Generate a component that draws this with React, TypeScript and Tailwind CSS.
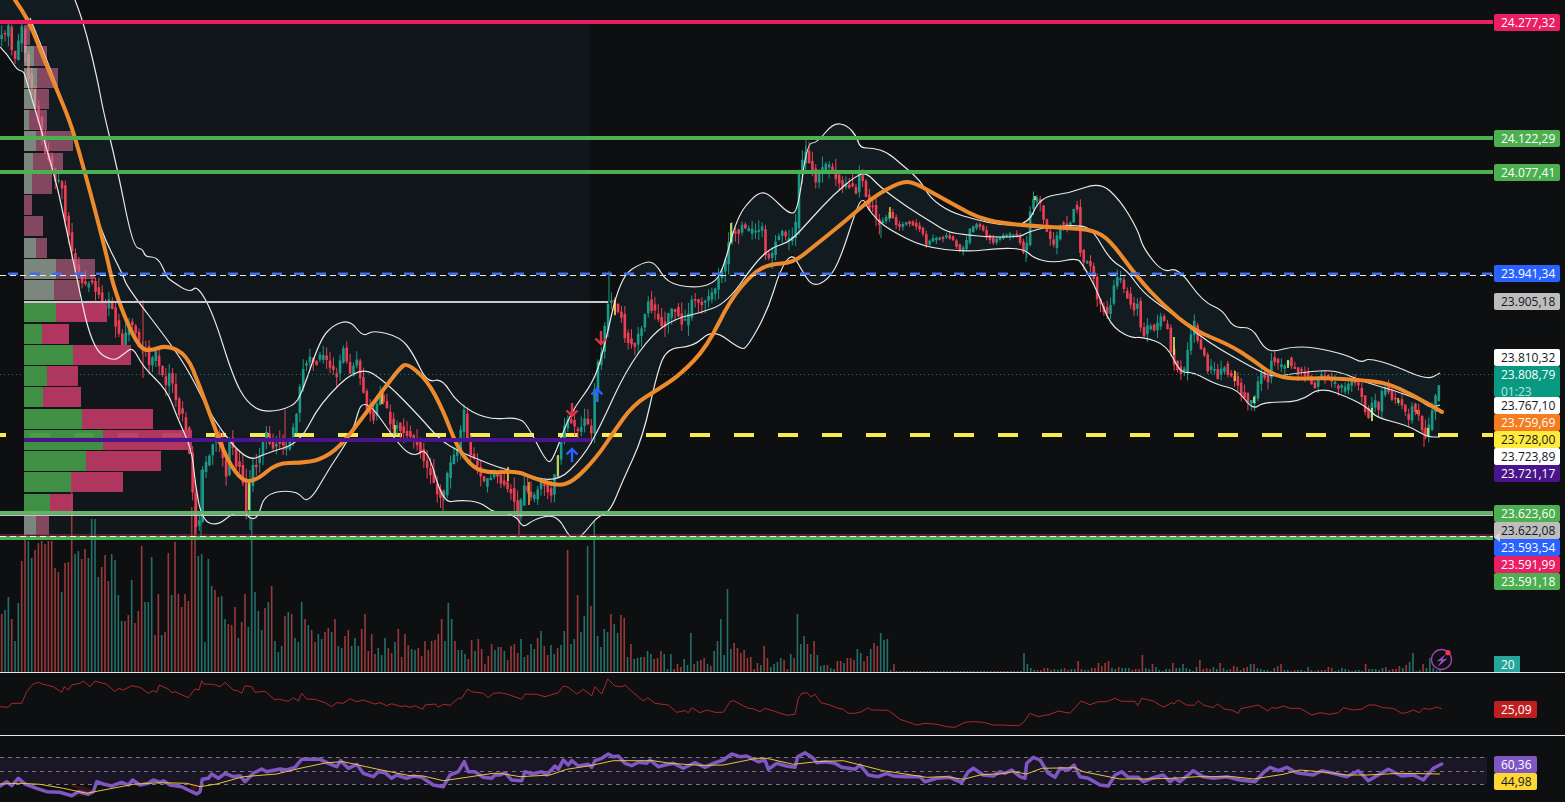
const FONT = "font-['Open_Sans',Arial,sans-serif]";

type Pt = [number, number];

// traced points, page pixels
const CLOSE: Pt[] = [[0,36],[5,33],[9,24],[12,52],[16,58],[19,40],[22,28],[27,70],[33,95],[39,120],[43,145],[50,162],[55,177],[62,185],[65,215],[70,240],[75,265],[85,285],[92,280],[100,298],[105,310],[110,300],[115,320],[122,345],[130,320],[135,330],[140,352],[145,345],[150,365],[155,350],[165,385],[170,370],[178,410],[183,415],[188,440],[192,482],[195,525],[200,520],[203,465],[208,462],[215,432],[220,445],[226,475],[230,435],[236,462],[242,470],[246,510],[252,465],[258,462],[265,430],[272,445],[280,440],[285,450],[295,425],[302,368],[310,358],[316,362],[322,352],[330,368],[338,375],[343,345],[350,372],[357,358],[362,388],[367,405],[373,418],[380,392],[388,412],[392,428],[398,425],[403,432],[412,436],[418,442],[425,462],[430,470],[435,488],[443,497],[448,472],[453,455],[458,445],[465,405],[468,448],[473,455],[478,468],[485,485],[495,470],[502,482],[512,490],[518,515],[525,482],[532,500],[542,480],[552,495],[555,472],[562,435],[568,418],[578,430],[585,420],[592,433],[595,382],[597,368],[603,345],[607,302],[612,300],[617,312],[622,315],[625,335],[632,346],[637,340],[643,322],[648,302],[658,315],[663,328],[668,316],[673,305],[683,323],[687,320],[693,297],[702,303],[707,300],[715,288],[718,278],[725,262],[728,245],[733,228],[737,232],[742,225],[747,230],[755,232],[762,225],[765,255],[771,256],[775,240],[780,232],[785,236],[788,238],[795,238],[798,175],[801,167],[805,150],[808,155],[815,180],[820,172],[827,162],[833,172],[838,178],[842,186],[847,183],[852,186],[857,192],[860,172],[865,185],[868,208],[872,205],[877,221],[885,220],[890,210],[895,223],[900,225],[905,222],[910,222],[917,226],[922,230],[926,243],[930,240],[937,237],[942,237],[947,236],[952,238],[960,250],[965,246],[970,229],[977,224],[982,228],[987,236],[993,241],[1002,236],[1012,234],[1017,236],[1022,245],[1026,260],[1028,215],[1032,205],[1035,197],[1038,197],[1042,208],[1045,225],[1048,236],[1052,241],[1055,250],[1058,229],[1062,222],[1066,225],[1070,226],[1073,207],[1078,210],[1081,260],[1085,262],[1092,268],[1098,305],[1103,306],[1108,316],[1112,295],[1115,282],[1118,274],[1123,286],[1128,297],[1132,310],[1138,302],[1142,335],[1145,332],[1150,322],[1155,330],[1162,315],[1168,331],[1172,355],[1178,370],[1185,370],[1188,349],[1191,335],[1194,322],[1198,343],[1204,355],[1208,368],[1212,368],[1218,376],[1225,365],[1228,372],[1234,378],[1242,393],[1248,400],[1254,400],[1259,379],[1263,372],[1268,378],[1272,355],[1282,368],[1288,360],[1295,370],[1305,372],[1308,375],[1315,385],[1322,372],[1328,376],[1332,382],[1342,388],[1347,388],[1352,382],[1358,385],[1364,405],[1368,418],[1374,395],[1378,410],[1384,385],[1393,398],[1398,400],[1403,403],[1408,421],[1412,405],[1417,410],[1421,425],[1424,435],[1428,430],[1431,420],[1434,402],[1438,390],[1442,375]];

const EMA: Pt[] = [[15,0],[28,18],[43,57],[60,97],[72,127],[85,173],[95,210],[107,257],[113,285],[127,323],[140,348],[150,351],[167,345],[187,355],[200,387],[213,423],[227,460],[243,482],[257,480],[277,463],[300,463],[320,460],[340,447],[363,417],[383,390],[400,368],[407,363],[427,380],[443,410],[457,447],[473,468],[490,473],[517,471],[533,478],[557,486],[573,482],[597,457],[613,433],[633,405],[657,390],[680,375],[707,347],[730,300],[753,273],[770,264],[793,263],[813,247],[843,223],[873,197],[900,182],[913,182],[933,193],[960,208],[977,217],[1000,223],[1033,226],[1067,228],[1093,230],[1110,240],[1137,277],[1163,305],[1193,330],[1230,345],[1253,360],[1273,375],[1293,379],[1327,378],[1360,380],[1387,383],[1413,395],[1442,412]];

const UPPER: Pt[] = [[75,0],[83,20],[97,77],[103,110],[117,167],[133,247],[143,249],[145,257],[158,257],[167,277],[170,280],[190,293],[197,285],[213,313],[233,377],[247,403],[265,413],[293,407],[302,393],[320,340],[333,325],[350,320],[363,337],[373,330],[400,337],[413,353],[427,383],[442,378],[457,403],[487,420],[520,417],[530,430],[547,463],[553,460],[570,413],[593,383],[603,353],[620,277],[643,262],[655,262],[667,283],[693,288],[713,284],[723,270],[737,217],[753,197],[762,192],[770,195],[790,215],[798,210],[807,143],[817,143],[833,123],[847,125],[857,137],[860,148],[873,148],[887,152],[900,163],[920,180],[930,198],[950,212],[977,220],[1000,225],[1028,225],[1040,197],[1070,193],[1100,182],[1120,200],[1138,230],[1143,248],[1163,273],[1178,267],[1203,302],[1223,310],[1233,328],[1252,327],[1263,347],[1273,352],[1290,347],[1313,347],[1347,355],[1362,363],[1368,358],[1393,365],[1427,380],[1440,373]];

const MIDDLE: Pt[] = [[30,18],[60,92],[85,170],[100,230],[123,275],[127,287],[170,343],[190,373],[213,420],[247,462],[267,453],[300,443],[320,403],[360,365],[387,383],[420,417],[440,440],[460,452],[480,460],[497,467],[520,473],[557,483],[583,457],[600,427],[625,372],[653,333],[677,318],[700,313],[727,303],[757,260],[773,247],[790,242],[810,220],[833,195],[857,175],[867,173],[880,187],[907,207],[933,223],[947,232],[967,235],[990,237],[1020,237],[1028,232],[1047,227],[1080,225],[1093,230],[1110,260],[1127,270],[1143,293],[1170,312],[1190,328],[1210,343],[1230,355],[1257,370],[1273,377],[1297,373],[1327,370],[1343,373],[1367,383],[1393,390],[1420,400],[1430,408],[1440,405]];

const LOWER: Pt[] = [[0,47],[8,55],[17,70],[23,71],[25,75],[55,177],[63,213],[75,270],[92,348],[113,362],[125,353],[133,347],[143,367],[167,390],[177,417],[192,450],[195,483],[202,520],[217,526],[233,513],[245,512],[250,519],[258,518],[265,493],[297,490],[308,505],[330,467],[353,433],[363,393],[400,447],[415,457],[427,447],[443,503],[460,500],[480,502],[493,512],[503,512],[517,517],[523,528],[533,520],[550,515],[560,520],[567,533],[575,542],[587,530],[597,517],[610,512],[623,480],[643,437],[657,373],[667,348],[693,347],[713,329],[740,349],[747,348],[768,310],[780,270],[792,253],[800,267],[812,287],[828,280],[840,260],[857,207],[863,198],[867,207],[877,220],[890,230],[923,247],[967,252],[1000,248],[1025,249],[1033,258],[1053,263],[1077,258],[1083,265],[1097,290],[1110,325],[1130,338],[1143,337],[1167,345],[1180,373],[1193,372],[1217,385],[1237,389],[1253,410],[1263,402],[1300,402],[1320,387],[1350,398],[1368,408],[1377,418],[1407,425],[1427,437],[1440,437]];

// volume heights, green positive and red negative
const VOL_A = [-58,62,75,-53,31,69,-111,-137,131,114,-122,-129,-131,-128,-131,-131,-104,-100,80,-109,-110,-200,118,121,-113,-123,114,153,153,95,-105,-117,-91,118,112,77,51,-51,-57,92,-49,-61,-126,70,70,115,-37,-78,37,-40,-119,77,-130,-78,-65,-78,-71,-165,-165,116,118,30,113,86,-82,-75,76,53,-48,-47,-65,34,-50,-78,45,155,80,61,42,-64,70,-86,31,20,26,-56,60,-58,34,30,70,-53,47,-42,-30,38,33,-40,-44,40,-53,26,24,-36,-42,26,34,26,-43,-58,-21,-38,-18,24,17,34,-24,-19,30,-43,-15,-38,-27,23,22,-24,-16,-31,-22,-31,-32,-38,-53,31,69,53,-31,22,22,18,-13,-32,21,-33,-23,-8,-16,-28,22,25];
const VOL_B = [-25,21,-12,-26,-28,-19,33,15,-17,28,23,-34,41,-26,-17,27,18,-24,27,41,-122,28,33,-77,40,56,126,-66,205,36,25,43,40,-58,48,39,-57,-54,15,-28,13,14,15,-15,21,18,-13,-14,-21,18,3,18,-3,-8,-5,13,7,39,-8,11,-12,-14,8,-6,21,31,53,17,83,23,-29,-24,-19,-22,-14,-15,-3,-9,7,-26,-14,5,8,10,14,-12,-3,18,-14,58,28,36,-28,18,-31,17,6,7,-7,4,3,-11,-11,9,-14,-14,-12,23,19,-11,-16,23,-29,-26,39,32,33,2,-8];
const VOL_C = [19,8,4,2,-2,-2,-4,-4,2,-3,2,3,-4,-2,3,3,-11,-3,2,2,-4,-4,-9,-6,-9,-11,4,3,-5,4,4,4,-2,-3,-3,-17,4,3,-8,5,2,1,3,3,-9,4,4,8,4,3,1,5,-12,-3,-4,-3,5,3,-9,4,2,-3,-6,-5,2,-4,-5,8,-8,4,3,2,2,-1,4,-6,-8,2,2,-1,-2,2,2,-1,5,-2,-1,2,-2,-2,-5,-4,1,2,4,3,-2,1,2,2,1,-8,3,3,3,2,4,-5,2,-3,-3,-6,4,-7,10,19,-1,2,-8,4,14,4,2,2];

const PROFILE: [number, number][] = [[24,30],[34,47],[37,58],[36,49],[29,47],[36,73],[33,63],[32,52],[24,32],[24,43],[36,47],[56,95],[54,80],[56,107],[42,69],[73,131],[47,78],[43,81],[82,153],[103,192],[86,161],[71,123],[50,73],[36,49]];

// coloured inner bars of the signal candles: x, top, bottom, colour
const SIGNALS: [number, number, number, string][] = [[249,483,510,"#d8f56a"],[382,392,404,"#f5d63c"],[395,425,437,"#c6ee5a"],[529,482,505,"#f0a030"],[558,455,476,"#f5d63c"],[508,467,481,"#f5c63c"],[615,300,315,"#f5d63c"],[731,223,243,"#d8f56a"],[890,207,218,"#f0b030"],[1035,196,200,"#d8f56a"],[1174,337,355,"#d8f56a"],[1254,397,403,"#d8f56a"],[1372,408,421,"#d8f56a"],[1398,398,403,"#f0a030"],[1417,410,414,"#f08030"],[1428,428,437,"#d8f56a"],[1288,360,368,"#d8f56a"],[1235,371,381,"#f0c030"]];

// long wicks the generator would not give
const SPIKES: [number, number, number, string][] = [[609,271,302,"#1a9a86"],[1424,430,447,"#ea3f55"],[806,140,160,"#1a9a86"],[195,480,537,"#ea3f55"],[201,470,537,"#1a9a86"],[250,470,530,"#1a9a86"],[143,300,378,"#ea3f55"],[285,410,450,"#ea3f55"],[443,490,515,"#ea3f55"],[519,500,535,"#ea3f55"],[881,225,238,"#1a9a86"],[1026,247,262,"#1a9a86"]];

const fromZoom = (off: number, flat: number[]): Pt[] => {
  const out: Pt[] = [];
  for (let i = 0; i < flat.length; i += 2) out.push([off + flat[i] / 3, 530 + flat[i + 1] / 3]);
  return out;
};

const ADX: Pt[] = [
  ...fromZoom(0, [0,530,25,532,35,520,65,520,80,485,100,462,115,457,130,463,160,470,185,487,193,470,205,480,215,465,240,460,250,453,270,470,285,453,320,463,345,485,355,475,370,480,395,467,420,472,445,490,460,482,470,487,478,465,505,477,515,488,525,485,565,503,585,477,597,480,605,452,612,462,640,463,660,470,675,457,700,480,715,483,725,490,735,467,755,470,765,487,795,484,825,510,835,507,865,514,880,503,895,513,905,490,920,507,945,508,975,518,995,530,1010,518,1030,520,1050,506,1070,515,1090,510,1125,522,1140,518,1160,527,1175,521,1205,530,1215,527,1230,532,1245,527,1268,538,1275,525,1305,522,1315,532,1330,523,1350,526,1375,505,1385,505,1403,477,1415,485,1450,490,1465,503,1480,490]),
  ...fromZoom(500, [0,488,20,492,65,508,75,492,110,493,135,500,175,488,190,468,205,472,230,492,250,478,275,497,285,470,305,492,323,447,345,468,365,470,375,465,400,488,430,513,443,503,465,520,505,525,530,547,555,542,565,548,575,533,600,548,620,540,645,547,670,547,690,515,700,512,745,535,760,536,780,545,795,535,860,556,885,553,895,505,905,490,920,488,933,500,945,493,963,518,990,525,1015,535,1030,538,1045,550,1065,550,1085,545,1103,533,1115,540,1165,541,1200,568,1250,585,1275,580,1310,583,1340,590,1365,592,1395,577,1420,575,1450,577,1480,585]),
  ...fromZoom(1000, [0,585,55,587,70,578,90,550,115,560,150,553,175,543,210,550,243,513,270,524,295,515,320,515,345,505,365,514,405,514,413,527,425,505,460,513,490,532,515,518,522,522,533,510,560,525,583,526,595,512,610,525,640,533,652,522,675,538,695,540,715,550,722,536,775,525,803,543,815,533,830,535,850,528,870,535,900,535,935,555,960,548,990,553,1015,548,1030,533,1060,540,1085,538,1105,525,1125,525,1150,533,1180,535,1205,550,1220,548,1240,540,1258,548,1270,535,1290,538,1310,531,1325,536]),
];

const RSI: Pt[] = [
  ...fromZoom(0, [0,768,20,755,35,767,55,745,75,762,110,775,140,785,180,787,215,797,235,785,265,793,280,785,290,755,310,762,335,768,365,757,385,765,398,750,420,765,445,760,460,750,480,757,490,752,510,765,545,770,575,785,590,792,600,785,607,748,625,745,635,732,655,745,675,730,700,740,720,737,735,755,760,730,785,717,800,725,840,717,860,720,885,712,905,688,925,688,960,688,985,700,1010,710,1022,692,1045,715,1070,703,1090,730,1120,740,1135,725,1155,728,1175,745,1190,735,1220,745,1240,738,1265,742,1300,765,1330,770,1350,735,1375,725,1393,695,1405,725,1425,725,1450,742,1475,745,1485,735]),
  ...fromZoom(500, [0,735,15,728,35,750,65,752,75,725,95,732,125,725,140,735,165,708,175,718,190,690,205,705,215,692,235,708,265,703,275,712,285,692,305,685,325,672,340,680,355,678,375,700,395,707,415,697,440,700,450,690,475,710,495,705,520,700,550,715,570,705,585,698,615,712,640,700,670,690,695,672,720,680,740,678,775,695,795,690,805,718,830,700,860,708,885,712,893,680,915,668,940,685,950,698,975,695,1005,700,1025,712,1065,718,1080,705,1105,735,1135,740,1160,730,1180,738,1220,740,1260,740,1275,755,1310,745,1350,742,1385,758,1405,725,1420,715,1450,735,1480,738]),
  ...fromZoom(1000, [0,725,15,730,35,720,60,740,75,745,80,700,100,682,120,690,145,730,165,742,180,715,205,720,222,705,240,740,265,745,300,765,325,768,345,735,365,725,385,742,415,742,430,755,455,745,490,735,510,755,525,745,540,755,580,722,610,740,640,745,680,740,720,750,765,755,790,728,810,712,835,722,860,712,890,728,940,735,965,722,1000,730,1040,740,1075,722,1105,752,1135,735,1165,718,1205,738,1240,735,1270,750,1300,715,1325,702]),
];

const RSI_MA: Pt[] = [
  ...fromZoom(0, [0,762,60,760,120,763,190,775,260,790,300,782,400,763,480,758,560,760,600,770,650,762,730,740,830,732,900,715,980,698,1030,695,1130,717,1230,737,1270,738,1330,752,1400,742,1480,730]),
  ...fromZoom(500, [0,730,60,740,150,735,200,718,270,707,340,692,460,692,510,700,600,706,670,705,770,685,800,685,880,703,950,695,1030,692,1150,722,1280,742,1340,740,1390,748,1440,735,1480,732]),
  ...fromZoom(1000, [0,732,40,725,80,732,125,715,225,713,250,725,300,735,360,747,430,747,520,745,590,740,700,740,760,747,850,733,900,720,980,727,1040,735,1100,735,1200,730,1320,732]),
];

const line = (pts: Pt[]) => pts.map((p) => `${p[0].toFixed(1)},${p[1].toFixed(1)}`).join(" ");

// quadratic through midpoints, keeps the traced bands from looking faceted
const smooth = (pts: Pt[]) => {
  let d = `M${pts[0][0]} ${pts[0][1]}`;
  for (let i = 1; i < pts.length - 1; i++) {
    const mx = (pts[i][0] + pts[i + 1][0]) / 2;
    const my = (pts[i][1] + pts[i + 1][1]) / 2;
    d += ` Q${pts[i][0]} ${pts[i][1]} ${mx.toFixed(1)} ${my.toFixed(1)}`;
  }
  const last = pts[pts.length - 1];
  return `${d} L${last[0]} ${last[1]}`;
};

const pathAt = (x: number) => {
  for (let i = 1; i < CLOSE.length; i++) {
    if (x <= CLOSE[i][0]) {
      const [x0, y0] = CLOSE[i - 1];
      const [x1, y1] = CLOSE[i];
      return y0 + ((y1 - y0) * (x - x0)) / (x1 - x0);
    }
  }
  return CLOSE[CLOSE.length - 1][1];
};

const rng = (seed: number) => () => {
  seed = (seed + 0x6d2b79f5) | 0;
  let t = Math.imul(seed ^ (seed >>> 15), 1 | seed);
  t = (t + Math.imul(t ^ (t >>> 7), 61 | t)) ^ t;
  return ((t ^ (t >>> 14)) >>> 0) / 4294967296;
};

const STEP = 3.35;
const candles = (() => {
  const rand = rng(42);
  const out: { x: number; top: number; bot: number; hi: number; lo: number; up: boolean }[] = [];
  for (let x = 1.7; x <= 1442; x += STEP) {
    const quiet = x > 880 && x < 1025;
    const amp = quiet ? 2 : 6;
    const wick = quiet ? 4 : x > 1025 ? 8 : 11;
    const open = pathAt(x - STEP) + (rand() - 0.5) * amp;
    const close = pathAt(x) + (rand() - 0.5) * amp;
    const top = Math.min(open, close);
    const bot = Math.max(open, close) + 1.5;
    out.push({ x, top, bot, hi: top - rand() * wick, lo: bot + rand() * wick, up: close < open });
  }
  return out;
})();

const volumeBars = (() => {
  const bars: { x: number; v: number }[] = [];
  VOL_A.forEach((v, i) => bars.push({ x: 1.7 + (i * 496.6) / (VOL_A.length - 1), v }));
  VOL_B.forEach((v, i) => bars.push({ x: 501 + (i * 393) / (VOL_B.length - 1), v }));
  for (let x = 897; x < 1022; x += STEP) bars.push({ x, v: Math.round(x) % 2 ? 1 : -1 });
  VOL_C.forEach((v, i) => bars.push({ x: 1024 + (i * 416) / (VOL_C.length - 1), v }));
  return bars;
})();

const YELLOW_DASHES = Array.from({ length: 35 }, (_, i) => -14 + i * 44);
const BLUE_DASHES = Array.from({ length: 68 }, (_, i) => 8 + i * 22);

function Arrow({ x, y, color, up }: { x: number; y: number; color: string; up?: boolean }) {
  const d = up
    ? `M${x} ${y + 14} V${y + 1} M${x - 5.5} ${y + 6.5} L${x} ${y + 1} L${x + 5.5} ${y + 6.5}`
    : `M${x} ${y} V${y + 13} M${x - 5.5} ${y + 7.5} L${x} ${y + 13} L${x + 5.5} ${y + 7.5}`;
  return <path d={d} fill="none" stroke={color} strokeWidth={2.4} />;
}

function MainChart() {
  return (
    <svg className="block h-[672px] w-[1493px]" viewBox="0 0 1493 672">
      <rect x={24} y={24} width={566} height={512} fill="#101619" />

      {volumeBars.map((b, i) => (
        <rect key={i} x={b.x - 0.8} y={672 - Math.abs(b.v)} width={1.6} height={Math.abs(b.v)} fill={b.v > 0 ? "#256f69" : "#97393b"} />
      ))}

      <path d={`${smooth(UPPER)} L1440 ${LOWER[LOWER.length - 1][1]} ${[...LOWER].reverse().map((p) => `L${p[0]} ${p[1]}`).join(" ")} L0 0 Z`} fill="#121b20" />

      {YELLOW_DASHES.map((x) => (
        <rect key={x} x={x} y={433} width={20} height={4} fill="#f9ea4f" />
      ))}

      {candles.map((c, i) => {
        const color = c.up ? "#1a9a86" : "#ea3f55";
        return (
          <g key={i} fill={color}>
            <rect x={c.x - 0.5} y={c.hi} width={1} height={c.lo - c.hi} />
            <rect x={c.x - 1.3} y={c.top} width={2.6} height={c.bot - c.top} />
          </g>
        );
      })}
      {SPIKES.map(([x, a, b, color]) => (
        <rect key={x} x={x - 0.5} y={a} width={1} height={b - a} fill={color} />
      ))}
      {SIGNALS.map(([x, a, b, color]) => (
        <rect key={x} x={x - 0.8} y={a} width={1.6} height={b - a} fill={color} />
      ))}

      {PROFILE.map(([green, pink], i) => {
        const y = Math.round(25 + 21.25 * i) + (i > 12 ? 1 : 0);
        const muted = i <= 12 || i === 23;
        return (
          <g key={i}>
            <rect x={24} y={y} width={green - 24} height={20} fill={muted ? "#b3c2b3" : "#429848"} fillOpacity={muted ? 0.66 : 0.94} />
            <rect x={green} y={y} width={pink - green} height={20} fill={muted ? "#c9668c" : "#bb3864"} fillOpacity={muted ? 0.62 : 0.94} />
          </g>
        );
      })}

      <g fill="none" stroke="#e8e8e8" strokeWidth={1.2}>
        <path d={smooth(UPPER)} />
        <path d={smooth(MIDDLE)} />
        <path d={smooth(LOWER)} />
      </g>
      <path d={smooth(EMA)} fill="none" stroke="#ec8a2c" strokeWidth={4} strokeLinecap="round" />

      <Arrow x={572} y={403} color="#d9344a" />
      <Arrow x={601} y={331} color="#d9344a" />
      <Arrow x={572} y={448} color="#2962ff" up />
      <Arrow x={597} y={388} color="#2962ff" up />

      <rect x={0} y={20} width={1493} height={4} fill="#e91e63" />
      <rect x={0} y={136} width={1493} height={4} fill="#4caf50" />
      <rect x={0} y={170} width={1493} height={4} fill="#4caf50" />

      {BLUE_DASHES.map((x) => (
        <rect key={x} x={x} y={272.5} width={10} height={2.5} fill="#3f6fe8" />
      ))}
      <line x1={0} x2={1493} y1={275.5} y2={275.5} stroke="#e8e8e8" strokeWidth={1} strokeDasharray="6 4" />
      <rect x={24} y={301} width={584} height={2} fill="#c9c9c9" />
      <line x1={0} x2={1493} y1={374.5} y2={374.5} stroke="#1a9a86" strokeOpacity={0.8} strokeWidth={1} strokeDasharray="1 3" />
      <rect x={24} y={438} width={566} height={4} fill="#4a148c" />
      <rect x={0} y={511} width={1493} height={3.5} fill="#5cb860" />
      <rect x={0} y={514.5} width={1493} height={1.5} fill="#c4c4c4" />
      <rect x={0} y={534.5} width={1493} height={1} fill="#a8204f" />
      <rect x={0} y={536} width={1493} height={4} fill="#4caf50" />
      <line x1={0} x2={1493} y1={536.5} y2={536.5} stroke="#f0f0f0" strokeWidth={1} strokeDasharray="6 4" />

      <circle cx={1441.5} cy={659.5} r={10} fill="#0e0f10" stroke="#9c3fb0" strokeWidth={1.4} />
      <path d="M1446 654 L1436.5 661.5 L1441.5 660.5 L1437.5 667 L1447.5 658.5 L1442 659.5 Z" fill="#a24fd0" />
      <circle cx={1448} cy={652.7} r={2.6} fill="#f23645" />
    </svg>
  );
}

function AdxChart() {
  return (
    <svg className="block h-[62px] w-[1493px]" viewBox="0 673 1493 62">
      <polyline points={line(ADX)} fill="none" stroke="#a82a2a" strokeWidth={1} />
    </svg>
  );
}

function RsiChart() {
  return (
    <svg className="block h-[66px] w-[1493px]" viewBox="0 736 1493 66">
      <rect x={0} y={757} width={1487} height={27} fill="#1a1625" />
      {[757.5, 771.5, 784.5].map((y) => (
        <line key={y} x1={0} x2={1487} y1={y} y2={y} stroke="#77787f" strokeWidth={1} strokeDasharray="4 4" />
      ))}
      <polygon points="68,784 85,787 95,791 72,797 88,795" fill="#3c1414" />
      <polygon points="190,784 198,784 196,795 192,794" fill="#3c1414" />
      <polyline points={line(RSI)} fill="none" stroke="#7e57c2" strokeWidth={3.5} strokeLinejoin="round" strokeLinecap="round" />
      <polyline points={line(RSI_MA)} fill="none" stroke="#e6c53a" strokeWidth={1} />
    </svg>
  );
}

function PriceLabel({ className, children }: { className: string; children: React.ReactNode }) {
  return (
    <div className={`shrink-0 rounded-[2px] pl-[7px] text-[12px] font-medium leading-[17px] ${className}`}>
      {children}
    </div>
  );
}

// tag colours of the price axis, stacked in flow
const TAG = "h-[17px] w-[66px]";

function MainAxis() {
  return (
    <div className="relative flex h-[672px] w-[72px] flex-col pl-px pt-[14px]">
      <PriceLabel className={`${TAG} bg-[#e91e63] text-white`}>24.277,32</PriceLabel>
      <PriceLabel className={`${TAG} mt-[99px] bg-[#4caf50] text-white`}>24.122,29</PriceLabel>
      <PriceLabel className={`${TAG} mt-[17px] bg-[#4caf50] text-white`}>24.077,41</PriceLabel>
      <PriceLabel className={`${TAG} mt-[84px] bg-[#2962ff] text-white`}>23.941,34</PriceLabel>
      <PriceLabel className={`${TAG} mt-[11px] bg-[#bdbdbd] text-[#131722]`}>23.905,18</PriceLabel>
      <PriceLabel className={`${TAG} mt-[39px] bg-white text-[#131722]`}>23.810,32</PriceLabel>
      <PriceLabel className="h-[31px] w-[66px] bg-[#089981] leading-[15px] text-white">
        23.808,79
        <div className="text-[#b5e6dc]">01:23</div>
      </PriceLabel>
      <PriceLabel className={`${TAG} bg-white text-[#131722]`}>23.767,10</PriceLabel>
      <PriceLabel className={`${TAG} bg-[#f57c1f] text-white`}>23.759,69</PriceLabel>
      <PriceLabel className={`${TAG} bg-[#ffeb3b] text-[#131722]`}>23.728,00</PriceLabel>
      <PriceLabel className={`${TAG} bg-white text-[#131722]`}>23.723,89</PriceLabel>
      <PriceLabel className={`${TAG} bg-[#4a148c] text-white`}>23.721,17</PriceLabel>
      <PriceLabel className={`${TAG} mt-[23px] bg-[#4caf50] text-white`}>23.623,60</PriceLabel>
      <PriceLabel className={`${TAG} bg-[#bdbdbd] text-[#131722]`}>23.622,08</PriceLabel>
      <PriceLabel className={`${TAG} bg-[#2962ff] text-white`}>23.593,54</PriceLabel>
      <PriceLabel className={`${TAG} bg-[#e91e63] text-white`}>23.591,99</PriceLabel>
      <PriceLabel className={`${TAG} bg-[#4caf50] text-white`}>23.591,18</PriceLabel>
      <PriceLabel className="mt-auto h-[16px] w-[26px] rounded-none bg-[#26a69a] text-white">20</PriceLabel>
      <svg className="absolute left-px top-[532px] h-[10px] w-[6px]" viewBox="0 0 6 10">
        <polygon points="0,5 6,0 6,10" fill="#d6d6d6" />
      </svg>
    </div>
  );
}

export default function App() {
  return (
    <div className={`flex h-[802px] w-[1565px] flex-col overflow-hidden bg-[#0e0f10] ${FONT}`}>
      <div className="flex">
        <MainChart />
        <MainAxis />
      </div>
      <div className="h-px bg-[#e8e8e8]" />
      <div className="flex">
        <AdxChart />
        <div className="flex h-[62px] w-[72px] flex-col pl-px pt-[28px]">
          <PriceLabel className="h-[17px] w-[43px] bg-[#c01f1f] text-white">25,09</PriceLabel>
        </div>
      </div>
      <div className="h-px bg-[#e8e8e8]" />
      <div className="flex">
        <RsiChart />
        <div className="flex h-[66px] w-[72px] flex-col pl-px pt-[20px]">
          <PriceLabel className="h-[17px] w-[43px] bg-[#7e57c2] text-white">60,36</PriceLabel>
          <PriceLabel className="h-[17px] w-[43px] bg-[#fdd835] text-[#131722]">44,98</PriceLabel>
        </div>
      </div>
    </div>
  );
}
